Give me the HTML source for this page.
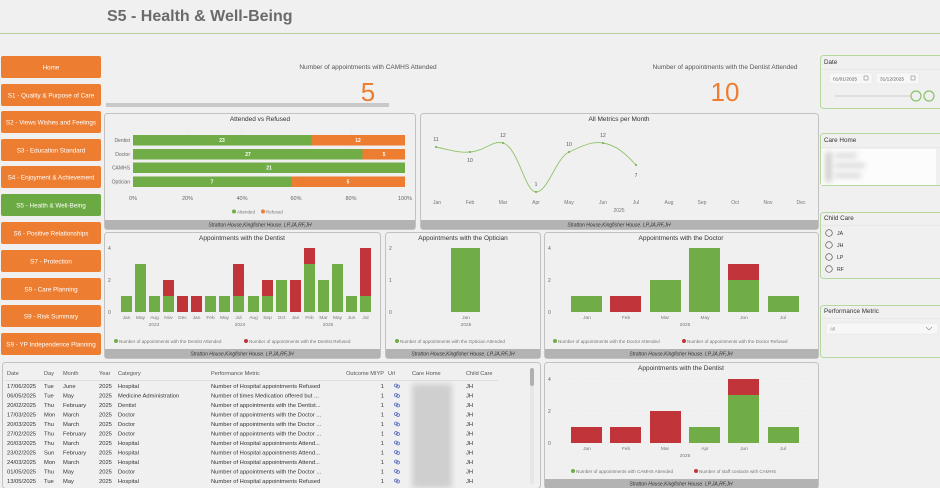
<!DOCTYPE html>
<html><head><meta charset="utf-8"><style>
html,body{margin:0;padding:0;background:#f0f0f0;width:940px;height:488px;overflow:hidden}
svg{display:block;font-family:"Liberation Sans",sans-serif}
</style></head><body>
<svg width="940" height="488" viewBox="0 0 940 488" xmlns="http://www.w3.org/2000/svg">
<defs><filter id="bl"><feGaussianBlur stdDeviation="3"/></filter></defs>
<rect width="940" height="488" fill="#f0f0f0"/>
<text x="107" y="21" font-size="16" font-weight="bold" fill="#6b6b6b">S5 - Health &amp; Well-Being</text>
<line x1="0" y1="33.5" x2="940" y2="33.5" stroke="#b5cf9e" stroke-width="1"/>

<!-- nav -->
<g font-size="6.3" fill="#fff" text-anchor="middle">
<rect x="1" y="56" width="100" height="22" rx="2" fill="#ED7D31"/><text x="51" y="69.5">Home</text>
<rect x="1" y="84" width="100" height="22" rx="2" fill="#ED7D31"/><text x="51" y="97.5">S1 - Quality &amp; Purpose of Care</text>
<rect x="1" y="111" width="100" height="22" rx="2" fill="#ED7D31"/><text x="51" y="124.5">S2 - Views Wishes and Feelings</text>
<rect x="1" y="139" width="100" height="22" rx="2" fill="#ED7D31"/><text x="51" y="152.5">S3 - Education Standard</text>
<rect x="1" y="166" width="100" height="22" rx="2" fill="#ED7D31"/><text x="51" y="179.5">S4 - Enjoyment &amp; Achievement</text>
<rect x="1" y="194" width="100" height="22" rx="2" fill="#6BAA42"/><text x="51" y="207.5">S5 - Health &amp; Well-Being</text>
<rect x="1" y="222" width="100" height="22" rx="2" fill="#ED7D31"/><text x="51" y="235.5">S6 - Positive Relationships</text>
<rect x="1" y="250" width="100" height="22" rx="2" fill="#ED7D31"/><text x="51" y="263.5">S7 - Protection</text>
<rect x="1" y="278" width="100" height="22" rx="2" fill="#ED7D31"/><text x="51" y="291.5">S9 - Care Planning</text>
<rect x="1" y="305" width="100" height="22" rx="2" fill="#ED7D31"/><text x="51" y="318.5">S9 - Risk Summary</text>
<rect x="1" y="333" width="100" height="22" rx="2" fill="#ED7D31"/><text x="51" y="346.5">S9 - YP Independence Planning</text>
</g>

<!-- KPIs -->
<text x="368" y="69" font-size="6.5" fill="#555" text-anchor="middle">Number of appointments with CAMHS Attended</text>
<text x="368" y="101" font-size="26" fill="#ED7D31" text-anchor="middle">5</text>
<rect x="106" y="103" width="283" height="4" fill="#c8c8c8"/>
<text x="725" y="69" font-size="6.5" fill="#555" text-anchor="middle">Number of appointments with the Dentist Attended</text>
<text x="725" y="101" font-size="26" fill="#ED7D31" text-anchor="middle">10</text>

<!-- panels -->
<g fill="#f0f0f0" stroke="#c2c2c2" stroke-width="1">
<rect x="104.5" y="113.5" width="311" height="116" rx="3"/>
<rect x="420.5" y="113.5" width="398" height="116" rx="3"/>
<rect x="104.5" y="232.5" width="276" height="126" rx="3"/>
<rect x="385.5" y="232.5" width="155" height="126" rx="3"/>
<rect x="544.5" y="232.5" width="274" height="126" rx="3"/>
<rect x="2.5" y="362.5" width="538" height="126" rx="3"/>
<rect x="544.5" y="362.5" width="274" height="126" rx="3"/>
</g>
<g fill="#b3b3b3">
<rect x="105" y="220" width="310" height="9"/>
<rect x="421" y="220" width="397" height="9"/>
<rect x="105" y="349" width="275" height="9"/>
<rect x="386" y="349" width="154" height="9"/>
<rect x="545" y="349" width="273" height="9"/>
<rect x="545" y="479" width="273" height="9"/>
</g>
<g font-size="5" font-style="italic" fill="#333" text-anchor="middle">
<text x="260" y="226.5">Stratton House,Kingfisher House. LP,JA,RF,JH</text>
<text x="619" y="226.5">Stratton House,Kingfisher House. LP,JA,RF,JH</text>
<text x="242" y="355.5">Stratton House,Kingfisher House. LP,JA,RF,JH</text>
<text x="463" y="355.5">Stratton House,Kingfisher House. LP,JA,RF,JH</text>
<text x="681" y="355.5">Stratton House,Kingfisher House. LP,JA,RF,JH</text>
<text x="681" y="485.5">Stratton House,Kingfisher House. LP,JA,RF,JH</text>
</g>

<!-- Attended vs Refused -->
<text x="260" y="121" font-size="6.5" fill="#333" text-anchor="middle">Attended vs Refused</text>
<g stroke="#ddd" stroke-dasharray="1,2" stroke-width="0.5">
<line x1="187.5" y1="128" x2="187.5" y2="188"/><line x1="242" y1="128" x2="242" y2="188"/><line x1="296" y1="128" x2="296" y2="188"/><line x1="351" y1="128" x2="351" y2="188"/>
</g>
<g font-size="5" fill="#666" text-anchor="end">
<text x="130" y="142">Dentist</text><text x="130" y="156">Doctor</text><text x="130" y="169.5">CAMHS</text><text x="130" y="183.5">Optician</text>
</g>
<rect x="133" y="135" width="178.5" height="10.5" fill="#70AD47"/><rect x="311.5" y="135" width="93.5" height="10.5" fill="#ED7D31"/>
<rect x="133" y="149" width="229.5" height="10.5" fill="#70AD47"/><rect x="362.5" y="149" width="42.5" height="10.5" fill="#ED7D31"/>
<rect x="133" y="162.5" width="272" height="10.5" fill="#70AD47"/>
<rect x="133" y="176.5" width="158.5" height="10.5" fill="#70AD47"/><rect x="291.5" y="176.5" width="113.5" height="10.5" fill="#ED7D31"/>
<g font-size="5" fill="#fff" font-weight="bold" text-anchor="middle">
<text x="222" y="142">23</text><text x="358" y="142">12</text>
<text x="248" y="156">27</text><text x="384" y="156">5</text>
<text x="269" y="169.5">21</text>
<text x="212" y="183.5">7</text><text x="348" y="183.5">5</text>
</g>
<g font-size="5.5" fill="#666" text-anchor="middle">
<text x="133" y="200">0%</text><text x="187.5" y="200">20%</text><text x="242" y="200">40%</text><text x="296" y="200">60%</text><text x="351" y="200">80%</text><text x="405" y="200">100%</text>
</g>
<circle cx="234" cy="211.5" r="2" fill="#70AD47"/><text x="237" y="213.3" font-size="4.5" fill="#777">Attended</text>
<circle cx="263" cy="211.5" r="2" fill="#ED7D31"/><text x="266" y="213.3" font-size="4.5" fill="#777">Refused</text>

<!-- All metrics -->
<text x="619" y="121" font-size="6.5" fill="#333" text-anchor="middle">All Metrics per Month</text>
<path d="M436,147 C450,150 458,153 470,152 C485,151 492,140 503,143 C518,147 525,192 536,192 C548,192 556,158 569,152 C582,146 592,141 603,143 C616,145 626,154 636,165" fill="none" stroke="#8fc46a" stroke-width="0.9"/>
<g fill="#70AD47"><circle cx="436" cy="147" r="1"/><circle cx="470" cy="152" r="1"/><circle cx="503" cy="143" r="1"/><circle cx="536" cy="192" r="1"/><circle cx="569" cy="152" r="1"/><circle cx="603" cy="143" r="1"/><circle cx="636" cy="165" r="1"/></g>
<g font-size="5" fill="#555" text-anchor="middle">
<text x="436" y="141">11</text><text x="470" y="162">10</text><text x="503" y="137">12</text><text x="536" y="186">1</text><text x="569" y="146">10</text><text x="603" y="137">12</text><text x="636" y="177">7</text>
</g>
<g font-size="5" fill="#777" text-anchor="middle">
<text x="437" y="204">Jan</text><text x="470" y="204">Feb</text><text x="503" y="204">Mar</text><text x="536" y="204">Apr</text><text x="569" y="204">May</text><text x="603" y="204">Jun</text><text x="636" y="204">Jul</text><text x="669" y="204">Aug</text><text x="702" y="204">Sep</text><text x="735" y="204">Oct</text><text x="768" y="204">Nov</text><text x="801" y="204">Dec</text>
<text x="619" y="212">2025</text>
</g>

<!-- Dentist chart -->
<text x="242" y="240" font-size="6.5" fill="#333" text-anchor="middle">Appointments with the Dentist</text>
<g stroke="#ddd" stroke-dasharray="1,2" stroke-width="0.5"><line x1="118" y1="248" x2="375" y2="248"/><line x1="118" y1="280" x2="375" y2="280"/><line x1="118" y1="312" x2="375" y2="312"/></g>
<g font-size="5" fill="#666"><text x="108" y="250">4</text><text x="108" y="282">2</text><text x="108" y="314">0</text></g>
<g>
<rect x="121" y="296" width="11" height="16" fill="#70AD47"/>
<rect x="135" y="264" width="11" height="48" fill="#70AD47"/>
<rect x="149" y="296" width="11" height="16" fill="#70AD47"/>
<rect x="163" y="296" width="11" height="16" fill="#70AD47"/><rect x="163" y="280" width="11" height="16" fill="#C1353A"/>
<rect x="177" y="296" width="11" height="16" fill="#C1353A"/>
<rect x="191" y="296" width="11" height="16" fill="#C1353A"/>
<rect x="205" y="296" width="11" height="16" fill="#70AD47"/>
<rect x="219" y="296" width="11" height="16" fill="#70AD47"/>
<rect x="233" y="296" width="11" height="16" fill="#70AD47"/><rect x="233" y="264" width="11" height="32" fill="#C1353A"/>
<rect x="248" y="296" width="11" height="16" fill="#70AD47"/>
<rect x="262" y="296" width="11" height="16" fill="#70AD47"/><rect x="262" y="280" width="11" height="16" fill="#C1353A"/>
<rect x="276" y="280" width="11" height="32" fill="#70AD47"/>
<rect x="290" y="280" width="11" height="32" fill="#C1353A"/>
<rect x="304" y="264" width="11" height="48" fill="#70AD47"/><rect x="304" y="248" width="11" height="16" fill="#C1353A"/>
<rect x="318" y="280" width="11" height="32" fill="#70AD47"/>
<rect x="332" y="264" width="11" height="48" fill="#70AD47"/>
<rect x="346" y="296" width="11" height="16" fill="#70AD47"/>
<rect x="360" y="296" width="11" height="16" fill="#70AD47"/><rect x="360" y="248" width="11" height="48" fill="#C1353A"/>
</g>
<g font-size="4.8" fill="#777" text-anchor="middle">
<text x="126.5" y="319">Jan</text><text x="140.5" y="319">May</text><text x="154.5" y="319">Aug</text><text x="168.5" y="319">Nov</text><text x="182.5" y="319">Dec</text><text x="196.5" y="319">Jan</text><text x="210.5" y="319">Feb</text><text x="224.5" y="319">May</text><text x="238.5" y="319">Jul</text><text x="253.5" y="319">Aug</text><text x="267.5" y="319">Sep</text><text x="281.5" y="319">Oct</text><text x="295.5" y="319">Jan</text><text x="309.5" y="319">Feb</text><text x="323.5" y="319">Mar</text><text x="337.5" y="319">May</text><text x="351.5" y="319">Jun</text><text x="365.5" y="319">Jul</text>
<text x="154" y="326">2023</text><text x="240" y="326">2024</text><text x="328" y="326">2025</text>
</g>
<g font-size="4.6" fill="#777">
<circle cx="116" cy="341" r="2" fill="#70AD47"/><text x="119" y="342.8">Number of appointments with the Dentist Attended</text>
<circle cx="246" cy="341" r="2" fill="#C1353A"/><text x="249" y="342.8">Number of appointments with the Dentist Refused</text>
</g>

<!-- Optician -->
<text x="463" y="240" font-size="6.5" fill="#333" text-anchor="middle">Appointments with the Optician</text>
<g stroke="#ddd" stroke-dasharray="1,2" stroke-width="0.5"><line x1="396" y1="248" x2="536" y2="248"/><line x1="396" y1="280" x2="536" y2="280"/><line x1="396" y1="312" x2="536" y2="312"/></g>
<g font-size="5" fill="#666"><text x="389" y="250">2</text><text x="389" y="282">1</text><text x="389" y="314">0</text></g>
<rect x="451" y="248" width="29" height="64" fill="#70AD47"/>
<g font-size="4.8" fill="#777" text-anchor="middle"><text x="466" y="319">Jan</text><text x="466" y="326">2025</text></g>
<circle cx="397" cy="341" r="2" fill="#70AD47"/><text x="400" y="342.8" font-size="4.6" fill="#777">Number of appointments with the Optician Attended</text>

<!-- Doctor -->
<text x="681" y="240" font-size="6.5" fill="#333" text-anchor="middle">Appointments with the Doctor</text>
<g stroke="#ddd" stroke-dasharray="1,2" stroke-width="0.5"><line x1="566" y1="248" x2="812" y2="248"/><line x1="566" y1="280" x2="812" y2="280"/><line x1="566" y1="312" x2="812" y2="312"/></g>
<g font-size="5" fill="#666"><text x="548" y="250">4</text><text x="548" y="282">2</text><text x="548" y="314">0</text></g>
<rect x="571" y="296" width="31" height="16" fill="#70AD47"/>
<rect x="610" y="296" width="31" height="16" fill="#C1353A"/>
<rect x="650" y="280" width="31" height="32" fill="#70AD47"/>
<rect x="689" y="248" width="31" height="64" fill="#70AD47"/>
<rect x="728" y="280" width="31" height="32" fill="#70AD47"/><rect x="728" y="264" width="31" height="16" fill="#C1353A"/>
<rect x="768" y="296" width="31" height="16" fill="#70AD47"/>
<g font-size="4.8" fill="#777" text-anchor="middle"><text x="587" y="319">Jan</text><text x="626" y="319">Feb</text><text x="665" y="319">Mar</text><text x="705" y="319">May</text><text x="744" y="319">Jun</text><text x="783" y="319">Jul</text><text x="685" y="326">2025</text></g>
<g font-size="4.6" fill="#777">
<circle cx="555" cy="341" r="2" fill="#70AD47"/><text x="558" y="342.8">Number of appointments with the Doctor Attended</text>
<circle cx="684" cy="341" r="2" fill="#C1353A"/><text x="687" y="342.8">Number of appointments with the Doctor Refused</text>
</g>

<!-- Dentist 2 -->
<text x="681" y="370" font-size="6.5" fill="#333" text-anchor="middle">Appointments with the Dentist</text>
<g stroke="#ddd" stroke-dasharray="1,2" stroke-width="0.5"><line x1="566" y1="379" x2="812" y2="379"/><line x1="566" y1="411" x2="812" y2="411"/><line x1="566" y1="443" x2="812" y2="443"/></g>
<g font-size="5" fill="#666"><text x="548" y="381">4</text><text x="548" y="413">2</text><text x="548" y="445">0</text></g>
<rect x="571" y="427" width="31" height="16" fill="#C1353A"/>
<rect x="610" y="427" width="31" height="16" fill="#C1353A"/>
<rect x="650" y="411" width="31" height="32" fill="#C1353A"/>
<rect x="689" y="427" width="31" height="16" fill="#70AD47"/>
<rect x="728" y="395" width="31" height="48" fill="#70AD47"/><rect x="728" y="379" width="31" height="16" fill="#C1353A"/>
<rect x="768" y="427" width="31" height="16" fill="#70AD47"/>
<g font-size="4.8" fill="#777" text-anchor="middle"><text x="587" y="450">Jan</text><text x="626" y="450">Feb</text><text x="665" y="450">Mar</text><text x="705" y="450">Apr</text><text x="744" y="450">Jun</text><text x="783" y="450">Jul</text><text x="685" y="457">2025</text></g>
<g font-size="4.6" fill="#777">
<circle cx="573" cy="471" r="2" fill="#70AD47"/><text x="576" y="472.8">Number of appointments with CAMHS Attended</text>
<circle cx="696" cy="471" r="2" fill="#C1353A"/><text x="699" y="472.8">Number of staff contacts with CAMHS</text>
</g>

<!-- table -->
<g font-size="5.6" fill="#555">
<text x="7" y="375">Date</text><text x="44" y="375">Day</text><text x="63" y="375">Month</text><text x="99" y="375">Year</text><text x="118" y="375">Category</text><text x="211" y="375">Performance Metric</text><text x="384" y="375" text-anchor="end">Outcome MIYP</text><text x="388" y="375">Url</text><text x="412" y="375">Care Home</text><text x="466" y="375">Child Care</text>
</g>
<line x1="5" y1="380.5" x2="498" y2="380.5" stroke="#ccc" stroke-width="0.5"/>
<rect x="530" y="368" width="4" height="116" rx="2" fill="#e6e6e6"/><rect x="530" y="368" width="4" height="18" rx="2" fill="#b0b0b0"/>
<g filter="url(#bl)"><rect x="412" y="384" width="40" height="104" fill="#cfcfcf"/></g>
<g font-size="5.8" fill="#333">
<g transform="translate(0,388)"><text x="7">17/06/2025</text><text x="44">Tue</text><text x="63">June</text><text x="99">2025</text><text x="118">Hospital</text><text x="211">Number of Hospital appointments Refused</text><text x="384" text-anchor="end">1</text><text x="466">JH</text></g>
<g transform="translate(0,397.5)"><text x="7">06/05/2025</text><text x="44">Tue</text><text x="63">May</text><text x="99">2025</text><text x="118">Medicine Administration</text><text x="211">Number of times  Medication offered but ...</text><text x="384" text-anchor="end">1</text><text x="466">JH</text></g>
<g transform="translate(0,407)"><text x="7">20/02/2025</text><text x="44">Thu</text><text x="63">February</text><text x="99">2025</text><text x="118">Dentist</text><text x="211">Number of appointments with the Dentist...</text><text x="384" text-anchor="end">1</text><text x="466">JH</text></g>
<g transform="translate(0,416.5)"><text x="7">17/03/2025</text><text x="44">Mon</text><text x="63">March</text><text x="99">2025</text><text x="118">Doctor</text><text x="211">Number of appointments with the Doctor ...</text><text x="384" text-anchor="end">1</text><text x="466">JH</text></g>
<g transform="translate(0,426)"><text x="7">20/03/2025</text><text x="44">Thu</text><text x="63">March</text><text x="99">2025</text><text x="118">Doctor</text><text x="211">Number of appointments with the Doctor ...</text><text x="384" text-anchor="end">1</text><text x="466">JH</text></g>
<g transform="translate(0,435.5)"><text x="7">27/02/2025</text><text x="44">Thu</text><text x="63">February</text><text x="99">2025</text><text x="118">Doctor</text><text x="211">Number of appointments with the Doctor ...</text><text x="384" text-anchor="end">1</text><text x="466">JH</text></g>
<g transform="translate(0,445)"><text x="7">20/03/2025</text><text x="44">Thu</text><text x="63">March</text><text x="99">2025</text><text x="118">Hospital</text><text x="211">Number of Hospital appointments Attend...</text><text x="384" text-anchor="end">1</text><text x="466">JH</text></g>
<g transform="translate(0,454.5)"><text x="7">23/02/2025</text><text x="44">Sun</text><text x="63">February</text><text x="99">2025</text><text x="118">Hospital</text><text x="211">Number of Hospital appointments Attend...</text><text x="384" text-anchor="end">1</text><text x="466">JH</text></g>
<g transform="translate(0,464)"><text x="7">24/03/2025</text><text x="44">Mon</text><text x="63">March</text><text x="99">2025</text><text x="118">Hospital</text><text x="211">Number of Hospital appointments Attend...</text><text x="384" text-anchor="end">1</text><text x="466">JH</text></g>
<g transform="translate(0,473.5)"><text x="7">01/05/2025</text><text x="44">Thu</text><text x="63">May</text><text x="99">2025</text><text x="118">Doctor</text><text x="211">Number of appointments with the Doctor ...</text><text x="384" text-anchor="end">1</text><text x="466">JH</text></g>
<g transform="translate(0,483)"><text x="7">13/05/2025</text><text x="44">Tue</text><text x="63">May</text><text x="99">2025</text><text x="118">Hospital</text><text x="211">Number of Hospital appointments Refused</text><text x="384" text-anchor="end">1</text><text x="466">JH</text></g>
</g>
<g fill="none" stroke="#5a6fc4" stroke-width="0.8">
<circle cx="396" cy="385.5" r="1.5"/><circle cx="398" cy="386.5" r="1.5"/>
<circle cx="396" cy="395" r="1.5"/><circle cx="398" cy="396" r="1.5"/>
<circle cx="396" cy="404.5" r="1.5"/><circle cx="398" cy="405.5" r="1.5"/>
<circle cx="396" cy="414" r="1.5"/><circle cx="398" cy="415" r="1.5"/>
<circle cx="396" cy="423.5" r="1.5"/><circle cx="398" cy="424.5" r="1.5"/>
<circle cx="396" cy="433" r="1.5"/><circle cx="398" cy="434" r="1.5"/>
<circle cx="396" cy="442.5" r="1.5"/><circle cx="398" cy="443.5" r="1.5"/>
<circle cx="396" cy="452" r="1.5"/><circle cx="398" cy="453" r="1.5"/>
<circle cx="396" cy="461.5" r="1.5"/><circle cx="398" cy="462.5" r="1.5"/>
<circle cx="396" cy="471" r="1.5"/><circle cx="398" cy="472" r="1.5"/>
<circle cx="396" cy="480.5" r="1.5"/><circle cx="398" cy="481.5" r="1.5"/>
</g>

<!-- slicers -->
<g fill="#f0f0f0" stroke="#b5d99c" stroke-width="1">
<rect x="820.5" y="55.5" width="125" height="53" rx="3"/>
<rect x="820.5" y="133.5" width="125" height="52" rx="3"/>
<rect x="820.5" y="212.5" width="125" height="66" rx="3"/>
<rect x="820.5" y="305.5" width="125" height="52" rx="3"/>
</g>
<g stroke="#e0e0e0" stroke-width="0.6"><line x1="821" y1="69.5" x2="940" y2="69.5"/><line x1="821" y1="147.5" x2="940" y2="147.5"/><line x1="821" y1="225.5" x2="940" y2="225.5"/><line x1="821" y1="318.5" x2="940" y2="318.5"/></g>
<g font-size="6.3" fill="#333"><text x="824" y="64">Date</text><text x="824" y="142">Care Home</text><text x="824" y="220">Child Care</text><text x="824" y="313">Performance Metric</text></g>
<rect x="829" y="73" width="43" height="11" fill="#f7f7f7" stroke="#e3e3e3" stroke-width="0.5"/>
<rect x="876" y="73" width="43" height="11" fill="#f7f7f7" stroke="#e3e3e3" stroke-width="0.5"/>
<g font-size="4.8" fill="#555"><text x="833" y="80.5">01/01/2025</text><text x="880" y="80.5">31/12/2025</text></g>
<g fill="none" stroke="#777" stroke-width="0.5"><rect x="864" y="76" width="4" height="4"/><rect x="911" y="76" width="4" height="4"/></g>
<line x1="835" y1="96" x2="913" y2="96" stroke="#ccc" stroke-width="1"/>
<circle cx="916" cy="96" r="5" fill="#f0f0f0" stroke="#8bc26a" stroke-width="1.2"/>
<circle cx="929" cy="96" r="5" fill="#f0f0f0" stroke="#8bc26a" stroke-width="1.2"/>
<rect x="821" y="149" width="115" height="36" fill="#fcfcfc"/>
<g filter="url(#bl)" fill="#c2c2c2"><rect x="826" y="152" width="5" height="30"/><rect x="835" y="154" width="22" height="3"/><rect x="835" y="164" width="30" height="3"/><rect x="835" y="174" width="26" height="3"/></g>
<g fill="none" stroke="#444" stroke-width="0.6"><circle cx="829" cy="233" r="3.3"/><circle cx="829" cy="245" r="3.3"/><circle cx="829" cy="257" r="3.3"/><circle cx="829" cy="269" r="3.3"/></g>
<g font-size="5.2" fill="#333"><text x="837" y="235">JA</text><text x="837" y="247">JH</text><text x="837" y="259">LP</text><text x="837" y="271">RF</text></g>
<rect x="826" y="323" width="112" height="11" fill="#f7f7f7" stroke="#e3e3e3" stroke-width="0.5"/>
<text x="830" y="330.5" font-size="4.8" fill="#888">All</text>
<path d="M926,327 l3,3 l3,-3" fill="none" stroke="#888" stroke-width="0.6"/>
</svg>
</body></html>
